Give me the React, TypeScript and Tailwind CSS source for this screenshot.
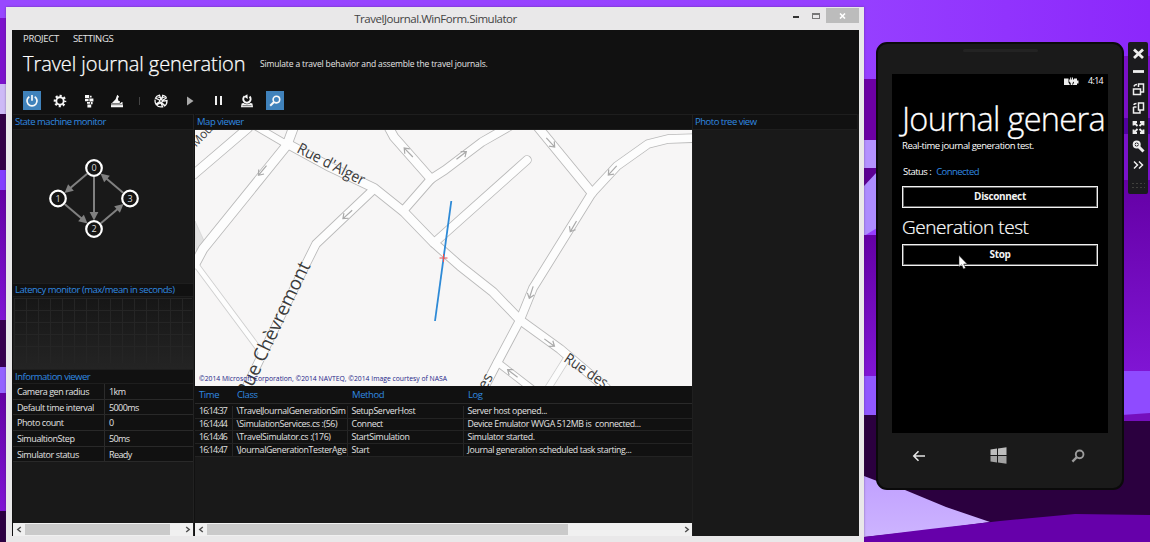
import React from "react";

const stroke = { fill: "none", stroke: "currentColor" } as const;

function Wallpaper() {
  return (
    <svg className="absolute inset-0" width="1150" height="542" viewBox="0 0 1150 542" preserveAspectRatio="none">
      <defs>
        <linearGradient id="sky" x1="0" x2="1" y1="0" y2="0">
          <stop offset="0" stopColor="#9848ff" />
          <stop offset="0.75" stopColor="#963fff" />
          <stop offset="1" stopColor="#8c27fb" />
        </linearGradient>
        <linearGradient id="mid" x1="0" x2="0" y1="0" y2="1">
          <stop offset="0" stopColor="#6400a5" />
          <stop offset="1" stopColor="#8015d4" />
        </linearGradient>
        <linearGradient id="lav" x1="0" x2="0" y1="0" y2="1">
          <stop offset="0" stopColor="#c0a0ff" />
          <stop offset="1" stopColor="#cdb4ff" />
        </linearGradient>
      </defs>
      <rect width="1150" height="542" fill="url(#sky)" />
      <rect y="18" width="8" height="66" fill="#7c12cc" />
      <rect y="84" width="8" height="30" fill="#cdb9f6" />
      <rect y="114" width="8" height="56" fill="#320046" />
      <rect y="170" width="8" height="20" fill="#843fff" />
      <rect y="190" width="8" height="130" fill="url(#mid)" />
      <rect y="320" width="8" height="48" fill="#37004f" />
      <rect y="367" width="8" height="26" fill="#9464ff" />
      <rect y="393" width="8" height="118" fill="url(#mid)" />
      <rect y="511" width="8" height="31" fill="#2d0042" />
      <rect x="864" y="79" width="13" height="64" fill="#6c00a4" />
      <rect x="864" y="140" width="13" height="28" fill="#b492ff" />
      <rect x="864" y="168" width="13" height="18" fill="#5c0092" />
      <path d="M864 186 L877 172 V228 L864 236Z" fill="#ad8cff" />
      <rect x="864" y="235" width="13" height="141" fill="url(#mid)" />
      <rect x="864" y="376" width="13" height="39" fill="#9158ff" />
      <rect x="1122" y="56" width="28" height="62" fill="#7a10c6" />
      <rect x="1122" y="118" width="28" height="26" fill="#5200a0" />
      <rect x="1122" y="134" width="28" height="46" fill="#7a12ca" />
      <rect x="1122" y="180" width="28" height="192" fill="url(#mid)" />
      <rect x="1122" y="371" width="28" height="44" fill="#8f4bff" />
      <path d="M864 415 H1150 V542 H864Z" fill="#2b003f" />
      <path d="M1122 415 L1150 413 V421 H1122Z" fill="#750fbd" />
      <path d="M864 476 L885 484 L905 490 L946 507 L990 522 L930 530 L864 537Z" fill="url(#lav)" />
      <path d="M864 537 L930 529 L1000 521 L1075 514 L1150 515 V542 H864Z" fill="#6600aa" />
    </svg>
  );
}

function PowerIcon() {
  return (
    <svg width="14" height="14" viewBox="0 0 14 14" {...stroke} strokeWidth="1.7">
      <path d="M4.300 2.700 A5 5 0 1 0 9.700 2.700" />
      <path d="M7 1 V6.800" />
    </svg>
  );
}
function GearIcon() {
  return (
    <svg width="14" height="14" viewBox="-7 -7 14 14" {...stroke}>
      <circle r="3.700" strokeWidth="1.900" />
      <circle r="5.200" strokeWidth="2.200" strokeDasharray="2.100 1.984" strokeDashoffset="1.050" />
    </svg>
  );
}
function TreeIcon() {
  return (
    <svg width="14" height="14" viewBox="0 0 14 14" fill="currentColor">
      <path d="M3 1h4.200v3.200H3zM3 5h3.600v2.200H3zM7.400 4.600h4v2.800h-4zM5 8h3.200v1.800H5zM5.400 10.400h3.800v3H5.400zM9 8h1.600v2.200H9zM8 1.800h1.600v1.800H8z" />
    </svg>
  );
}
function ShipIcon() {
  return (
    <svg width="14" height="14" viewBox="0 0 14 14" fill="currentColor">
      <path d="M7.200 0.800L9 2.600 7.800 4.800 8.600 7H9.800V9H2L5.600 5.200zM1 9.600h9.200l1-1.400h1.600l-.6 1.600h.8V13.200H1z" />
      <path d="M1 10.700h12" stroke="#111" strokeWidth="0.500" />
    </svg>
  );
}
function GlobeIcon() {
  return (
    <svg width="14" height="14" viewBox="-7 -7 14 14" {...stroke} strokeWidth="1.300">
      <path d="M-1.600 -1 L-5.500 -2.800 Q-4.600 -5.300 -1.500 -5.800 L0 -1.600 M.8 -2 L1.800 -5.700 Q5 -5 5.300 -3 L1.800 -.8 M2 .2 L6 -.5 Q6 3.500 3.600 5 L1 1.800 M0 2 L1.600 5.800 Q-2.800 6.400 -4.300 4 L-1 1.400 M-2 1 L-5 3.200 Q-6.400 1 -5.800 -1.400" />
      <path d="M-3.600 -4 Q0 -2.600 3.800 -3.600 M-4 3 Q0 1.600 3.600 3.600" strokeWidth="0.900" />
      <circle r="1.500" />
    </svg>
  );
}
function StampIcon() {
  return (
    <svg width="14" height="14" viewBox="0 0 14 14" {...stroke}>
      <path d="M4.600 2.200 A3.700 3.700 0 1 0 9.600 2.500" strokeWidth="1.900" />
      <path d="M7.400 .2 L7.800 5 L3.800 2.400Z" fill="currentColor" stroke="none" />
      <path d="M1.600 9.600 L3.400 9 Q7 11.400 10.600 9 L12.400 9.600 L13 13.300 H1Z" fill="currentColor" stroke="none" />
      <path d="M2.500 11.700 H11.500" stroke="#111" strokeWidth="0.600" />
    </svg>
  );
}
function SearchIcon({ size = 12 }: { size?: number }) {
  return (
    <svg width={size} height={size} viewBox="0 0 12 12" {...stroke}>
      <circle cx="7.400" cy="4.600" r="3.300" strokeWidth="1.600" />
      <path d="M5 7 L1.200 10.800" strokeWidth="2" />
    </svg>
  );
}

function Tool({ active, children }: { active?: boolean; children: React.ReactNode }) {
  return (
    <div className="flex w-[28.5px] justify-center">
      <div className={"flex h-[19px] w-[18px] items-center justify-center " + (active ? "bg-[#4082bb]" : "")}>{children}</div>
    </div>
  );
}

function Toolbar() {
  return (
    <div className="mt-[11px] flex h-[19px] items-center pl-[5.5px] text-[#f8f8f8]">
      <Tool active><PowerIcon /></Tool>
      <Tool><GearIcon /></Tool>
      <Tool><TreeIcon /></Tool>
      <Tool><ShipIcon /></Tool>
      <div className="flex w-[15.5px] justify-center"><div className="h-[8px] w-px bg-[#444]" /></div>
      <Tool><GlobeIcon /></Tool>
      <Tool>
        <svg width="8" height="10" viewBox="0 0 8 10"><path d="M1 0.500 L7.500 5 L1 9.500Z" fill="#a9a9a9" /></svg>
      </Tool>
      <Tool>
        <div className="flex gap-[3px]"><div className="h-[9px] w-[2px] bg-[#f0f0f0]" /><div className="h-[9px] w-[2px] bg-[#f0f0f0]" /></div>
      </Tool>
      <Tool><StampIcon /></Tool>
      <Tool active><SearchIcon /></Tool>
    </div>
  );
}

function PanelTitle({ children, className = "" }: { children: React.ReactNode; className?: string }) {
  return (
    <div className={"flex shrink-0 items-center border-y border-[#1e1e1e] bg-[#111] pl-[2px] text-[9.5px] leading-none text-[#3089e0] " + className}>
      {children}
    </div>
  );
}

const nodes = [
  { x: 81, y: 38, label: "0" },
  { x: 45, y: 68.5, label: "1" },
  { x: 81, y: 99, label: "2" },
  { x: 117, y: 68.5, label: "3" },
];
const edges = [[0, 1], [1, 2], [0, 2], [2, 3], [3, 0]];

function StateGraph() {
  return (
    <svg width="180" height="153" viewBox="0 0 180 153" className="shrink-0">
      {edges.map(([a, b]) => {
        const p = nodes[a];
        const q = nodes[b];
        const d = Math.hypot(q.x - p.x, q.y - p.y);
        const angle = (Math.atan2(q.y - p.y, q.x - p.x) * 180) / Math.PI;
        return (
          <g key={a + "-" + b} transform={`translate(${p.x} ${p.y}) rotate(${angle})`} fill="#808080">
            <path d={`M9 0 H${d - 15}`} stroke="#808080" strokeWidth="2" />
            <path d={`M${d - 8.5} 0 l-8.500 -4.400 v8.800z`} />
          </g>
        );
      })}
      {nodes.map((n) => (
        <g key={n.label}>
          <circle cx={n.x} cy={n.y} r="7.800" fill="#151515" stroke="#fff" strokeWidth="2.200" />
          <text x={n.x} y={n.y + 3} textAnchor="middle" fontSize="9" fill="#ddd">{n.label}</text>
        </g>
      ))}
    </svg>
  );
}

function LatencyGrid() {
  return (
    <svg width="180" height="72" viewBox="0 0 180 72" className="shrink-0">
      <defs>
        <linearGradient id="lg" x1="0" x2="0" y1="0" y2="1">
          <stop offset="0" stopColor="#161616" />
          <stop offset="1" stopColor="#242424" />
        </linearGradient>
      </defs>
      <rect width="180" height="72" fill="url(#lg)" />
      {Array.from({ length: 15 }, (_, i) => (
        <path key={i} d={`M${1.5 + i * 12} 1 V66`} stroke="#252525" />
      ))}
      {Array.from({ length: 5 }, (_, i) => (
        <path key={i} d={`M1 ${1.5 + i * 12} H179`} stroke="#252525" />
      ))}
    </svg>
  );
}

const info = [
  ["Camera gen radius", "1km"],
  ["Default time interval", "5000ms"],
  ["Photo count", "0"],
  ["SimualtionStep", "50ms"],
  ["Simulator status", "Ready"],
];

function Chevron({ flip }: { flip?: boolean }) {
  return (
    <svg width="6" height="7" viewBox="0 0 6 7" className={flip ? "rotate-180" : ""}>
      <path d="M4.800 1 L1.800 3.500 L4.800 6" fill="none" stroke="#505050" strokeWidth="1.500" />
    </svg>
  );
}
function ScrollBar({ thumb }: { thumb: string }) {
  return (
    <div className="flex h-[13px] shrink-0 items-center bg-[#f0f0f0]">
      <div className="flex w-[12px] justify-center"><Chevron /></div>
      <div className={"h-[11px] bg-[#cacaca] " + thumb} />
      <div className="grow" />
      <div className="flex w-[11px] justify-center"><Chevron flip /></div>
    </div>
  );
}

const mainRoads: [string, number][] = [
  ["M193 175 L248 128", 10],
  ["M257 127 L286 144", 8],
  ["M294 126 L287 145 L203 249 L195 264", 10.5],
  ["M194 262 L261 352", 6.5],
  ["M286 143 L330 167 L374 188 L404 212 L434 243 L460 266 L493 292 L520 320 L560 349 L606 388", 10],
  ["M373 190 L316 244 L306 264 L245 390", 9.5],
  ["M388 126 L394 137 L431 179", 10],
  ["M403 211 L431 179 L445 170 L482 142 L510 126", 9.5],
  ["M434 243 L527 160", 9.5],
  ["M537 126 L592 193", 10],
  ["M696 138 L668 139 L648 144 L617 166 L592 193 L533 288 L520 320 L495 367 L482 392", 9.5],
  ["M497 362 L532 389", 8],
];
const arrows: [number, number, number][] = [
  [262, 171, 130], [347, 215, 138], [408, 152, 226], [462, 155, -38], [551, 143, 48],
  [612, 171, 132], [573, 227, 120], [531, 293, 108], [550, 343, 36], [512, 373, 217],
];

function MapView() {
  return (
    <svg width="497" height="256" viewBox="195 130 497 256" className="block shrink-0 bg-[#f7f6f6]">
      <path d="M195 221 L205 243 L196 252Z" fill="#e2e2e2" stroke="#ccc" strokeWidth=".6" />
      <g fill="none" strokeLinejoin="round" strokeLinecap="round">
        <path d="M567 358 L547 390" stroke="#d0d0d0" strokeWidth="7.500" />
        {mainRoads.map(([d, w]) => <path key={d} d={d} stroke={w < 7 ? "#cfcfcf" : "#b9b9b9"} strokeWidth={w} />)}
        <path d="M567 358 L547 390" stroke="#fcfcfc" strokeWidth="6" />
        {mainRoads.map(([d, w]) => <path key={d} d={d} stroke="#fdfdfd" strokeWidth={w - 1.7} />)}
      </g>
      {arrows.map(([x, y, r]) => (
        <path key={x} transform={`translate(${x} ${y}) rotate(${r})`} d="M-7 0 H5 M1 -3.500 L5.500 0 L1 3.500" fill="none" stroke="#aaa" strokeWidth="1.200" />
      ))}
      <g fill="#3c3c3c" stroke="#f9f9f9" strokeWidth="1.200" paintOrder="stroke" strokeLinejoin="round">
        <text transform="translate(296 152) rotate(27)" fontSize="15.500" textLength="74" lengthAdjust="spacingAndGlyphs">Rue d'Alger</text>
        <text transform="translate(247.500 398) rotate(-64.500)" fontSize="19" textLength="147" lengthAdjust="spacingAndGlyphs">Rue Chèvremont</text>
        <text transform="translate(563 361) rotate(34)" fontSize="15" textLength="49" lengthAdjust="spacingAndGlyphs">Rue des</text>
        <text transform="translate(486 390.500) rotate(-62)" fontSize="15">es</text>
        <text transform="translate(196 147.500) rotate(-46)" fontSize="12" textLength="28">Moul</text>
      </g>
      <text x="199" y="381" fontSize="7.300" fill="#1c1c86" textLength="248" lengthAdjust="spacingAndGlyphs">©2014 Microsoft Corporation, ©2014 NAVTEQ, ©2014 Image courtesy of NASA</text>
      <path d="M451.300 201 L435 321" stroke="#2e8ad6" strokeWidth="1.800" />
      <path d="M439.500 258 H447.500 M443.500 254 V262" stroke="#f05050" strokeWidth="1" />
    </svg>
  );
}

const log = [
  ["16:14:37", "\\TravelJournalGenerationSim", "SetupServerHost", "Server host opened..."],
  ["16:14:44", "\\SimulationServices.cs :(56)", "Connect", "Device Emulator WVGA 512MB is  connected..."],
  ["16:14:46", "\\TravelSimulator.cs :(176)", "StartSimulation", "Simulator started."],
  ["16:14:47", "\\JournalGenerationTesterAge", "Start", "Journal generation scheduled task starting..."],
];
const logCols = "grid grid-cols-[38px_115px_116px_1fr] whitespace-pre leading-none";

function Simulator() {
  return (
    <div className="absolute top-[7px] left-[6px] flex h-[535px] w-[858px] flex-col bg-[#e9e8e9] pr-[5px] pl-[6px] shadow-[0_0_2px_rgba(60,40,80,0.5)]">
      <div className="relative flex h-[23px] shrink-0 items-center justify-center text-[11.5px] text-[#444]">
        <span className="tracking-[-0.48px]">TravelJournal.WinForm.Simulator</span>
        <div className="absolute top-px right-0 flex h-[15px] items-center">
          <div className="mt-[3px] mr-[13px] h-[2px] w-[6px] bg-[#333]" />
          <div className="mr-[6px] h-[6px] w-[8px] border border-t-2 border-[#777]" />
          <div className="flex h-[15px] w-[33px] items-center justify-center bg-[#bcbcbc]">
            <svg width="7" height="6" viewBox="0 0 7 6"><path d="M1 .5 L6 5.500 M6 .5 L1 5.500" stroke="#fff" strokeWidth="1.600" /></svg>
          </div>
        </div>
      </div>
      <div className="flex h-[506px] shrink-0 flex-col bg-[#111]">
        <div className="flex h-[18px] items-center gap-[14px] pl-[11px] text-[9.5px] leading-none tracking-[-0.3px] text-[#e4e4e4]">
          <span>PROJECT</span>
          <span>SETTINGS</span>
        </div>
        <div className="flex h-[32px] items-center pl-[11px] whitespace-nowrap text-white">
          <span className="w-[237px] text-[20px] leading-none font-light tracking-[-0.06px] [-webkit-text-stroke:0.25px_#fff]">Travel journal generation</span>
          <span className="text-[8.5px] leading-none tracking-[-0.15px] text-[#e6e6e6]">Simulate a travel behavior and assemble the travel journals.</span>
        </div>
        <Toolbar />
        <div className="mt-[4px] flex h-[422px]">
          <div className="ml-px flex w-[181px] shrink-0 flex-col border-r border-[#222] bg-[#191919]">
            <PanelTitle className="h-[16px] tracking-[-0.5px]">State machine monitor</PanelTitle>
            <StateGraph />
            <PanelTitle className="h-[14px] tracking-[-0.49px]">Latency monitor (max/mean in seconds)</PanelTitle>
            <LatencyGrid />
            <PanelTitle className="h-[15px] tracking-[-0.5px]">Information viewer</PanelTitle>
            {info.map(([k, v]) => (
              <div key={k} className="flex h-[15.7px] shrink-0 items-center border-b border-[#292929] bg-[#111] text-[9px] leading-none tracking-[-0.42px] text-[#e2e2e2]">
                <span className="flex h-full w-[92px] items-center border-r border-[#2b2b2b] pl-[4px] whitespace-nowrap">{k}</span>
                <span className="pl-[4px] tracking-[-0.6px]">{v}</span>
              </div>
            ))}
            <div className="grow" />
            <ScrollBar thumb="w-[145px]" />
          </div>
          <div className="ml-px flex w-[497px] shrink-0 flex-col bg-[#191919]">
            <PanelTitle className="h-[16px] tracking-[-0.45px]">Map viewer</PanelTitle>
            <MapView />
            <div className={logCols + " h-[18px] items-center border-b border-[#2a2a2a] bg-[#111] text-[9.5px] tracking-[-0.4px] text-[#3089e0]"}>
              {["Time", "Class", "Method", "Log"].map((h) => <span key={h} className="pl-[4px]">{h}</span>)}
            </div>
            <div className="h-[2px] bg-[#111]" />
            {log.map((row) => (
              <div key={row[0]} className={logCols + " h-[12.7px] border-b border-[#232323] bg-[#111] text-[8.8px] tracking-[-0.36px] text-[#e2e2e2]"}>
                {row.map((c, i) => (
                  <span key={i} className={"flex items-center overflow-hidden " + (i === 0 ? "pl-[4px] tracking-[-0.85px] " : "pl-[3.5px] ") + (i < 3 ? "border-r border-[#262626]" : "")}>{c}</span>
                ))}
              </div>
            ))}
            <div className="grow" />
            <ScrollBar thumb="w-[361px]" />
          </div>
          <div className="flex grow flex-col border-l border-[#1f1f1f] bg-[#191919] pr-[2px]">
            <PanelTitle className="h-[16px] tracking-[-0.5px]">Photo tree view</PanelTitle>
          </div>
        </div>
      </div>
    </div>
  );
}

function PhoneButton({ children }: { children: React.ReactNode }) {
  return (
    <div className="flex h-[22px] w-[196px] shrink-0 items-center justify-center border border-[#f2f2f2] pb-[2px] text-[10px] leading-none font-bold tracking-[-0.35px] text-[#f2f2f2] shadow-[inset_0_0_0_1px_rgba(255,255,255,0.4)]">
      {children}
    </div>
  );
}

function Phone() {
  return (
    <div className="absolute top-[42px] left-[876px] flex h-[448px] w-[248px] flex-col items-center rounded-[11px] border-2 border-[#0a0a0a] bg-[#1a1a1a] text-white">
      <div className="mt-[5px] h-[3px] w-[75px] shrink-0 rounded bg-[#232323]" />
      <div className="mt-[22px] flex h-[359px] w-[216px] shrink-0 flex-col overflow-hidden bg-black pl-[10px] whitespace-nowrap">
        <div className="flex h-[15px] items-center justify-end gap-[11px] pr-[5px] text-[8.8px] leading-none tracking-[-0.6px]">
          <svg width="15" height="9" viewBox="0 0 15 9" fill="#eee" className="-mr-[2px]">
            <path d="M0 1.500h4.500v4l1.500 2.500H0zM13 1.500h-3v4L8.800 8H13V6.500h1.500v-3H13z" />
            <path d="M5.200 2.500h1V.5h1v2h.800v-2h1v2h1v2L8.500 6v2h-1.800V6L5.200 4.500z" />
          </svg>
          <span>4:14</span>
        </div>
        <div className="mt-[8px] h-[44px] text-[32.5px] leading-[44px] font-light tracking-[-0.7px] [-webkit-text-stroke:0.3px_#fff]">Journal genera</div>
        <div className="-mt-px h-[11px] text-[9.5px] leading-[11px] tracking-[-0.47px]">Real-time journal generation test.</div>
        <div className="mt-[15px] flex h-[11px] gap-[5px] pl-px text-[9.5px] leading-[11px] tracking-[-0.55px]">
          <span>Status :</span>
          <span className="text-[#3089e0]">Connected</span>
        </div>
        <div className="mt-[9px]"><PhoneButton>Disconnect</PhoneButton></div>
        <div className="mt-[6px] h-[26px] text-[19px] leading-[26px] font-light tracking-[-0.45px] [-webkit-text-stroke:0.2px_#fff]">Generation test</div>
        <div className="mt-[4px]"><PhoneButton>Stop</PhoneButton></div>
      </div>
      <div className="mt-[14px] mr-[4px] flex w-[173px] items-center justify-between">
        <svg width="14" height="12" viewBox="0 0 14 12" fill="none" stroke="#e4e4e4" strokeWidth="1.600"><path d="M13 6 H2 M6.500 1.200 L1.800 6 L6.500 10.800" /></svg>
        <svg width="17" height="17" viewBox="0 0 17 17" fill="#bdbdbd">
          <path d="M.5 2.500 L7 1.600 V8 H.5zM8 1.500 L16.500 .3 V8 H8z" />
          <path d="M.5 9 H7 V15.400 L.5 14.500zM8 9 H16.500 V16.700 L8 15.500z" fill="#a2a2a2" />
        </svg>
        <span className="text-[#9c9c9c]"><SearchIcon size={14} /></span>
      </div>
    </div>
  );
}

function EmulatorBar() {
  return (
    <div className="absolute top-[42px] left-[1128px] h-[152px] w-[20px] rounded-[2px] bg-[#1b1b1e]">
      <svg width="20" height="152" viewBox="0 0 20 152" fill="none" stroke="#eee" strokeWidth="1.500">
        <path d="M6 7.500 L15 16 M15 7.500 L6 16" strokeWidth="2.800" />
        <path d="M5 29.500 H16" strokeWidth="2.800" />
        <path d="M5.500 47 H12.500 V52.500 H5.500zM10.500 45 V42 H15.500 V50 H13M6 44.500 Q6.500 42.500 9 42.500" />
        <path d="M5.500 65 V71 H12 V68.500M5.500 65 H8.500M10.500 61 H15.500 V68 H10.500zM6 63 Q6 61.500 8.500 61.500" />
        <path d="M5.500 83.500 V80 H9M5.500 80 L9.500 84M15.500 83.500 V80 H12M15.500 80 L11.500 84M5.500 87.500 V91 H9M5.500 91 L9.500 87M15.500 87.500 V91 H12M15.500 91 L11.500 87" strokeWidth="1.800" />
        <circle cx="8.700" cy="102.500" r="3" strokeWidth="2" />
        <path d="M7.200 102.500 H10.200 M8.700 101 V104" strokeWidth="1" />
        <path d="M11 105 L15.500 109.500" strokeWidth="3" />
        <path d="M6 119.500 L9.500 123 L6 126.500 M11 119.500 L14.500 123 L11 126.500" />
        <path d="M4.500 141.500 H17 M4.500 145.500 H17" stroke="#66665c" strokeWidth="1" strokeDasharray="1 3" />
      </svg>
    </div>
  );
}

export default function App() {
  return (
    <div className="relative h-[542px] w-[1150px] overflow-hidden font-['Open_Sans','Noto_Sans',sans-serif]">
      <Wallpaper />
      <Simulator />
      <Phone />
      <EmulatorBar />
      <svg className="absolute top-[255px] left-[958px]" width="10" height="15" viewBox="0 0 10 15">
        <path d="M1 .5 V12 L3.600 9.700 L5.500 14 L7.500 13 L5.700 9 H9.200Z" fill="#fff" stroke="#222" strokeWidth=".5" />
      </svg>
    </div>
  );
}
